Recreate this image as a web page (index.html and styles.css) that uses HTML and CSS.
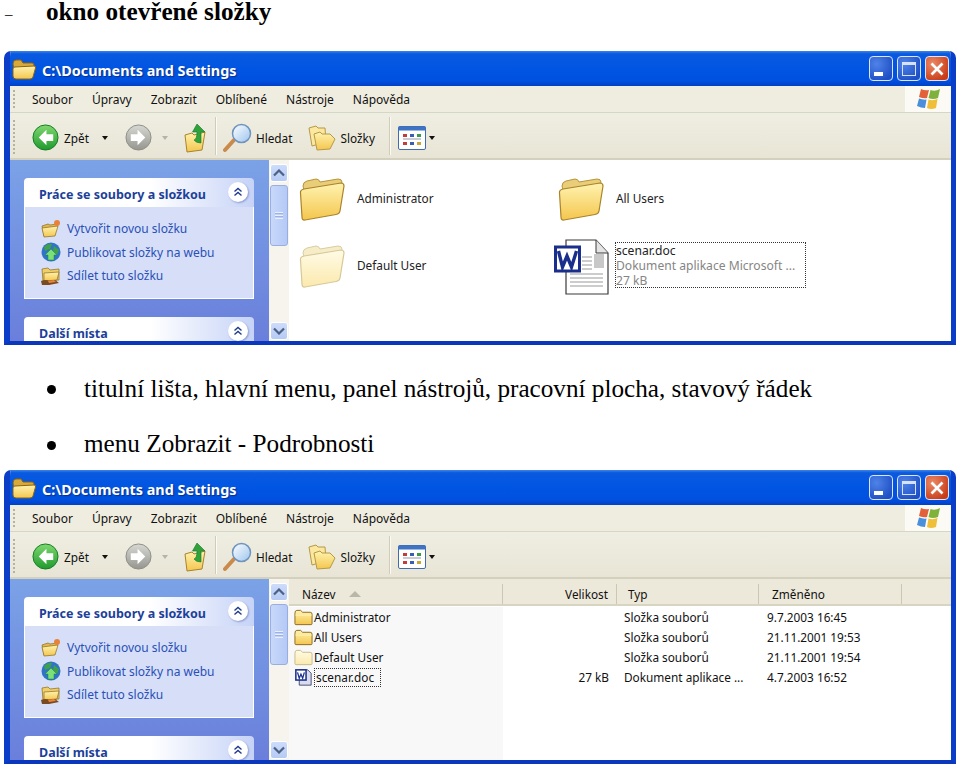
FILE: index.html
```html
<!DOCTYPE html>
<html lang="cs">
<head>
<meta charset="utf-8">
<title>okno otevřené složky</title>
<link rel="stylesheet" href="styles.css">
</head>
<body>
<svg class="defs" aria-hidden="true">
  <defs>
    <linearGradient id="gFolder" x1="0" y1="0" x2="0" y2="1"><stop offset="0" stop-color="#fff3b0"/><stop offset="1" stop-color="#f4c64e"/></linearGradient>
    <linearGradient id="gFolderPale" x1="0" y1="0" x2="0" y2="1"><stop offset="0" stop-color="#fffbe6"/><stop offset="1" stop-color="#fbe9ad"/></linearGradient>
    <linearGradient id="gGreen" x1="0" y1="0" x2="0" y2="1"><stop offset="0" stop-color="#7fd870"/><stop offset="1" stop-color="#1f9a2d"/></linearGradient>
    <linearGradient id="gGrey" x1="0" y1="0" x2="0" y2="1"><stop offset="0" stop-color="#d8d8d4"/><stop offset="1" stop-color="#96968f"/></linearGradient>
    <linearGradient id="gGlass" x1="0" y1="0" x2="1" y2="1"><stop offset="0" stop-color="#ffffff"/><stop offset="1" stop-color="#9cc4ee"/></linearGradient>
    <symbol id="i-folder" viewBox="0 0 46 46">
      <path d="M4 10 Q4 6 8 5 L17 3 Q20 3 21 6 L39 3 Q43 3 43 6 L41 12 L6 18Z" fill="#e9cd78" stroke="#b89436" stroke-width="1"/>
      <path d="M1.500 17 Q1 14 5 13 L42 7 Q45 7 45 10 L41 35 Q40.500 38 37 38.500 L6 44 Q3 44.500 3 41Z" fill="url(#gFolder)" stroke="#a8832b" stroke-width="1.200"/>
    </symbol>
    <symbol id="i-folder-pale" viewBox="0 0 46 46">
      <path d="M4 10 Q4 6 8 5 L17 3 Q20 3 21 6 L39 3 Q43 3 43 6 L41 12 L6 18Z" fill="#f6ecc8" stroke="#d8cda0" stroke-width="1"/>
      <path d="M1.500 17 Q1 14 5 13 L42 7 Q45 7 45 10 L41 35 Q40.500 38 37 38.500 L6 44 Q3 44.500 3 41Z" fill="url(#gFolderPale)" stroke="#d6c998" stroke-width="1.200"/>
    </symbol>
    <symbol id="i-title-folder" viewBox="0 0 24 22">
      <path d="M1 6 Q1 2 4 2 L9 2 L11 5 L20 5 Q22 5 22 7 L22 10 L2 12Z" fill="#d9a93a" stroke="#8a6414"/>
      <path d="M1 11 Q1 9 3 9 L22 8 Q24 8 23.500 10 L21 19 Q20.500 21 18 21 L4 21 Q1 21 1 18Z" fill="url(#gFolder)" stroke="#8a6414"/>
    </symbol>
    <symbol id="i-back" viewBox="0 0 28 28">
      <circle cx="14" cy="14" r="13" fill="url(#gGreen)" stroke="#0f7a1e"/>
      <path d="M15 6 L7 14 L15 22 L15 17.500 L22 17.500 L22 10.500 L15 10.500Z" fill="#fff"/>
    </symbol>
    <symbol id="i-forward" viewBox="0 0 28 28">
      <circle cx="14" cy="14" r="13" fill="url(#gGrey)" stroke="#8c8c86"/>
      <path d="M13 6 L21 14 L13 22 L13 17.500 L6 17.500 L6 10.500 L13 10.500Z" fill="#fff"/>
    </symbol>
    <symbol id="i-up" viewBox="0 0 24 30">
      <path d="M1 12 L8 10 L10 12 L21 9 L18 27 L3 29Z" fill="url(#gFolder)" stroke="#a8832b"/>
      <path d="M13 1 L21 9 L17 9 L17 20 Q12 20 10 17 Q13 16 13 9 L8.500 9Z" fill="#2fa339" stroke="#15762a" stroke-width=".6"/>
    </symbol>
    <symbol id="i-search" viewBox="0 0 30 30">
      <path d="M2 27 L11 17" stroke="#c98a4b" stroke-width="4" stroke-linecap="round"/>
      <circle cx="18.500" cy="10.500" r="9" fill="url(#gGlass)" stroke="#6f94bd" stroke-width="1.500"/>
    </symbol>
    <symbol id="i-folders" viewBox="0 0 28 26">
      <path d="M1 3 L8 1 L10 3 L17 3 L18 17 L4 21Z" fill="#fbe7a0" stroke="#b59a45"/>
      <path d="M6 9 L12 7 L14 9 L22 9 L27 14 L22 24 L9 25Z" fill="url(#gFolder)" stroke="#b59a45"/>
    </symbol>
    <symbol id="i-views" viewBox="0 0 28 24">
      <rect x=".5" y=".5" width="27" height="23" rx="1.500" fill="#fff" stroke="#3f6cae"/>
      <rect x=".5" y=".5" width="27" height="4" fill="#3f74c4"/>
      <g fill="#c43c3c"><rect x="5" y="8" width="4" height="3"/><rect x="5" y="16" width="4" height="3"/></g>
      <g fill="#3a5fb0"><rect x="12" y="8" width="4" height="3"/><rect x="12" y="16" width="4" height="3"/></g>
      <g fill="#3a9a4a"><rect x="19" y="8" width="4" height="3"/></g>
      <rect x="19" y="16" width="4" height="3" fill="#c9a63c"/>
      <rect x="5" y="12" width="18" height="2" fill="#c8ccd4"/>
    </symbol>
    <symbol id="i-flag" viewBox="0 0 24 22">
      <path d="M4 1 Q8 3 12 2 L10 10 Q7 11 2 9Z" fill="#e2603a"/>
      <path d="M13.500 2 Q18 4 23 1 L21 10 Q16 12 11.500 10Z" fill="#7fb23c"/>
      <path d="M2 10.500 Q6 12 9.500 11.500 L8 20 Q4 20 0 18Z" fill="#4a8fdc"/>
      <path d="M11.500 11.500 Q16 13 20.500 11 L19 20 Q14 22 10 20Z" fill="#f0bf3a"/>
    </symbol>
    <symbol id="i-newfolder" viewBox="0 0 20 20">
      <path d="M1 7 L7 5 L9 6 L16 5 L16 8 L3 17Z" fill="#e5b84f" stroke="#8a6a1c" stroke-width=".7"/>
      <path d="M1 9 L17 7 L14 17 L3 18Z" fill="url(#gFolder)" stroke="#8a6a1c" stroke-width=".7"/>
      <circle cx="16" cy="4" r="3" fill="#e8823a"/>
    </symbol>
    <symbol id="i-globe" viewBox="0 0 20 20">
      <circle cx="10" cy="10" r="9.500" fill="#2f74c6"/>
      <path d="M3 5 Q7 1 11 2 L9 7 L4 9Z M13 4 L18 8 L16 13 L12 9Z" fill="#3fa14a"/>
      <path d="M10 7 L16 13 L13 13 L13 18 L7 18 L7 13 L4 13Z" fill="#7be07a" stroke="#1f8a33" stroke-width=".5"/>
    </symbol>
    <symbol id="i-share" viewBox="0 0 20 20">
      <path d="M1 3 L7 2 L9 4 L18 3 L18 14 L2 15Z" fill="#f1cf68" stroke="#8a6a1c" stroke-width=".7"/>
      <path d="M3 7 L18 6 L16 14 L3 15Z" fill="url(#gFolder)" stroke="#8a6a1c" stroke-width=".7"/>
      <path d="M0 15 Q5 13 8 15 L14 14 L18 17 L8 19 L1 19Z" fill="#7a4a22"/>
      <path d="M7 15 L13 14 L15 16 L8 17Z" fill="#e8843c"/>
    </symbol>
    <symbol id="i-doc" viewBox="0 0 56 56">
      <path d="M12 1 L42 1 L54 14 L54 55 L12 55Z" fill="#fff" stroke="#3a3a3a" stroke-width="1.200"/>
      <path d="M42 1 L42 14 L54 14" fill="#e4e4e4" stroke="#3a3a3a" stroke-width="1"/>
      <path d="M28 18 H38 M28 22 H38 M28 26 H38 M28 30 H38 M16 35 H49 M16 39 H49 M16 43 H49 M16 47 H49" stroke="#9a9a9a" stroke-width="1.200"/>
      <rect x="40" y="15" width="10" height="14" fill="#c8c8c8"/>
      <rect x="1.500" y="8" width="24" height="24" fill="#fff" stroke="#1a2f8c" stroke-width="3"/>
      <path d="M4.500 12 L8.500 28 L13 17 L17.500 28 L22.500 12" fill="none" stroke="#1a2f8c" stroke-width="3.400"/>
    </symbol>
    <symbol id="i-doc-small" viewBox="0 0 20 20">
      <path d="M5 1 L15 1 L19 5 L19 19 L5 19Z" fill="#d8dcec" stroke="#333a60"/>
      <rect x="1" y="1" width="12" height="12" fill="#fff" stroke="#1a2f8c" stroke-width="1.800"/>
      <path d="M3 4 L5 11 L7 6 L9 11 L11 4" fill="none" stroke="#1a2f8c" stroke-width="1.500"/>
    </symbol>
    <symbol id="i-folder-small" viewBox="0 0 20 17">
      <path d="M1 4 Q1 1 3 1 L7 1 L9 3 L17 3 Q19 3 19 5 L19 15 Q19 16 18 16 L2 16 Q1 16 1 15Z" fill="url(#gFolder)" stroke="#8a6a1c"/>
      <path d="M1.500 6 H18.500" stroke="#fdf2b8"/>
    </symbol>
    <symbol id="i-folder-small-pale" viewBox="0 0 20 17">
      <path d="M1 4 Q1 1 3 1 L7 1 L9 3 L17 3 Q19 3 19 5 L19 15 Q19 16 18 16 L2 16 Q1 16 1 15Z" fill="url(#gFolderPale)" stroke="#c8b988"/>
    </symbol>
    <symbol id="i-chev" viewBox="0 0 10 10">
      <path d="M1.500 4.500 L5 1.500 L8.500 4.500 M1.500 8.500 L5 5.500 L8.500 8.500" fill="none" stroke="#1f3a8f" stroke-width="1.400"/>
    </symbol>
    <symbol id="i-xup" viewBox="0 0 12 8">
      <path d="M1 6.500 L6 1.500 L11 6.500" fill="none" stroke="#4d6185" stroke-width="2.200"/>
    </symbol>
    <symbol id="i-xdown" viewBox="0 0 12 8">
      <path d="M1 1.500 L6 6.500 L11 1.500" fill="none" stroke="#4d6185" stroke-width="2.200"/>
    </symbol>
  </defs>
</svg>

<h1 class="heading"><span class="heading-dash">–</span><span>okno otevřené složky</span></h1>

<section class="win">
  <header class="titlebar">
    <svg class="ico-title"><use href="#i-title-folder"/></svg>
    <span class="title-text">C:\Documents and Settings</span>
    <div class="ctrls">
      <span class="ctrl ctrl-blue"><span class="glyph-min"></span></span>
      <span class="ctrl ctrl-blue"><span class="glyph-max"></span></span>
      <span class="ctrl ctrl-red"><svg class="glyph-x" viewBox="0 0 14 14"><path d="M1.500 1.500 L12.500 12.500 M12.500 1.500 L1.500 12.500" stroke="#fff" stroke-width="2.600"/></svg></span>
    </div>
  </header>
  <nav class="menubar">
    <span class="grip"></span>
    <span class="menu-item">Soubor</span><span class="menu-item">Úpravy</span><span class="menu-item">Zobrazit</span><span class="menu-item">Oblíbené</span><span class="menu-item">Nástroje</span><span class="menu-item">Nápověda</span>
    <span class="flagcell"><svg class="ico-flag"><use href="#i-flag"/></svg></span>
  </nav>
  <div class="toolbar">
    <span class="grip grip-tall"></span>
    <svg class="ico-nav ml-back"><use href="#i-back"/></svg><span class="tb-label ml-zpet">Zpět</span><span class="caret ml-c1"></span>
    <svg class="ico-nav ml-fwd"><use href="#i-forward"/></svg><span class="caret caret-dim ml-c2"></span>
    <svg class="ico-up"><use href="#i-up"/></svg>
    <span class="sep ml-s1"></span>
    <svg class="ico-search"><use href="#i-search"/></svg><span class="tb-label ml-hl">Hledat</span>
    <svg class="ico-folders"><use href="#i-folders"/></svg><span class="tb-label ml-sl">Složky</span>
    <span class="sep ml-s2"></span>
    <svg class="ico-views"><use href="#i-views"/></svg><span class="caret ml-c3"></span>
  </div>
  <div class="body">
    <aside class="pane">
      <div class="box">
        <div class="box-head"><span>Práce se soubory a složkou</span><span class="chev"><svg class="chev-i"><use href="#i-chev"/></svg></span></div>
        <ul class="box-list">
          <li><svg class="ico-task"><use href="#i-newfolder"/></svg>Vytvořit novou složku</li>
          <li><svg class="ico-task"><use href="#i-globe"/></svg>Publikovat složky na webu</li>
          <li><svg class="ico-task"><use href="#i-share"/></svg>Sdílet tuto složku</li>
        </ul>
      </div>
      <div class="box box-second">
        <div class="box-head box-head-wide"><span>Další místa</span><span class="chev"><svg class="chev-i"><use href="#i-chev"/></svg></span></div>
      </div>
    </aside>
    <div class="scroll">
      <span class="sbtn"><svg class="sarrow"><use href="#i-xup"/></svg></span>
      <span class="thumb"><span class="thumb-grip"></span></span>
      <span class="sbtn sbtn-down"><svg class="sarrow"><use href="#i-xdown"/></svg></span>
    </div>
    <main class="tiles">
      <div class="tile"><svg class="ico-big"><use href="#i-folder"/></svg><span class="tile-name">Administrator</span></div>
      <div class="tile"><svg class="ico-big"><use href="#i-folder"/></svg><span class="tile-name">All Users</span></div>
      <div class="tile"><svg class="ico-big"><use href="#i-folder-pale"/></svg><span class="tile-name">Default User</span></div>
      <div class="tile tile-doc"><svg class="ico-docbig"><use href="#i-doc"/></svg>
        <div class="tile-sel"><div>scenar.doc</div><div class="muted">Dokument aplikace Microsoft ...</div><div class="muted">27 kB</div></div>
      </div>
    </main>
  </div>
</section>

<ul class="bullets">
  <li>titulní lišta, hlavní menu, panel nástrojů, pracovní plocha, stavový řádek</li>
  <li>menu Zobrazit - Podrobnosti</li>
</ul>

<section class="win">
  <header class="titlebar">
    <svg class="ico-title"><use href="#i-title-folder"/></svg>
    <span class="title-text">C:\Documents and Settings</span>
    <div class="ctrls">
      <span class="ctrl ctrl-blue"><span class="glyph-min"></span></span>
      <span class="ctrl ctrl-blue"><span class="glyph-max"></span></span>
      <span class="ctrl ctrl-red"><svg class="glyph-x" viewBox="0 0 14 14"><path d="M1.500 1.500 L12.500 12.500 M12.500 1.500 L1.500 12.500" stroke="#fff" stroke-width="2.600"/></svg></span>
    </div>
  </header>
  <nav class="menubar">
    <span class="grip"></span>
    <span class="menu-item">Soubor</span><span class="menu-item">Úpravy</span><span class="menu-item">Zobrazit</span><span class="menu-item">Oblíbené</span><span class="menu-item">Nástroje</span><span class="menu-item">Nápověda</span>
    <span class="flagcell"><svg class="ico-flag"><use href="#i-flag"/></svg></span>
  </nav>
  <div class="toolbar">
    <span class="grip grip-tall"></span>
    <svg class="ico-nav ml-back"><use href="#i-back"/></svg><span class="tb-label ml-zpet">Zpět</span><span class="caret ml-c1"></span>
    <svg class="ico-nav ml-fwd"><use href="#i-forward"/></svg><span class="caret caret-dim ml-c2"></span>
    <svg class="ico-up"><use href="#i-up"/></svg>
    <span class="sep ml-s1"></span>
    <svg class="ico-search"><use href="#i-search"/></svg><span class="tb-label ml-hl">Hledat</span>
    <svg class="ico-folders"><use href="#i-folders"/></svg><span class="tb-label ml-sl">Složky</span>
    <span class="sep ml-s2"></span>
    <svg class="ico-views"><use href="#i-views"/></svg><span class="caret ml-c3"></span>
  </div>
  <div class="body">
    <aside class="pane">
      <div class="box">
        <div class="box-head"><span>Práce se soubory a složkou</span><span class="chev"><svg class="chev-i"><use href="#i-chev"/></svg></span></div>
        <ul class="box-list">
          <li><svg class="ico-task"><use href="#i-newfolder"/></svg>Vytvořit novou složku</li>
          <li><svg class="ico-task"><use href="#i-globe"/></svg>Publikovat složky na webu</li>
          <li><svg class="ico-task"><use href="#i-share"/></svg>Sdílet tuto složku</li>
        </ul>
      </div>
      <div class="box box-second">
        <div class="box-head box-head-wide"><span>Další místa</span><span class="chev"><svg class="chev-i"><use href="#i-chev"/></svg></span></div>
      </div>
    </aside>
    <div class="scroll">
      <span class="sbtn"><svg class="sarrow"><use href="#i-xup"/></svg></span>
      <span class="thumb"><span class="thumb-grip"></span></span>
      <span class="sbtn sbtn-down"><svg class="sarrow"><use href="#i-xdown"/></svg></span>
    </div>
    <main class="details">
      <div class="d-row d-head">
        <span class="c-name">Název<i class="sort-up"></i></span><span class="c-size">Velikost</span><span class="c-type">Typ</span><span class="c-date">Změněno</span><span class="c-end"></span>
      </div>
      <div class="d-row"><span class="c-name"><svg class="ico-small"><use href="#i-folder-small"/></svg>Administrator</span><span class="c-size"></span><span class="c-type">Složka souborů</span><span class="c-date">9.7.2003 16:45</span></div>
      <div class="d-row"><span class="c-name"><svg class="ico-small"><use href="#i-folder-small"/></svg>All Users</span><span class="c-size"></span><span class="c-type">Složka souborů</span><span class="c-date">21.11.2001 19:53</span></div>
      <div class="d-row"><span class="c-name"><svg class="ico-small"><use href="#i-folder-small-pale"/></svg>Default User</span><span class="c-size"></span><span class="c-type">Složka souborů</span><span class="c-date">21.11.2001 19:54</span></div>
      <div class="d-row"><span class="c-name"><svg class="ico-small"><use href="#i-doc-small"/></svg><span class="focus">scenar.doc</span></span><span class="c-size">27 kB</span><span class="c-type">Dokument aplikace ...</span><span class="c-date">4.7.2003 16:52</span></div>
      <div class="d-fill"></div>
    </main>
  </div>
</section>
</body>
</html>
```

FILE: styles.css
```css
* { box-sizing: border-box; }
html, body { margin: 0; padding: 0; background: #fff; }
body { width: 960px; height: 766px; overflow: hidden; font-family: "Liberation Serif", serif; color: #000; }
.defs { position: absolute; width: 0; height: 0; overflow: hidden; }

.heading { display: flex; margin: 0; height: 51px; padding: 0 0 0 5px; font-size: 25.200px; line-height: 24px; font-weight: 700; }
.heading-dash { width: 41px; font-weight: 400; font-size: 15px; line-height: 29px; }

.bullets { list-style: none; margin: 0; padding: 0; height: 125px; font-size: 25.200px; }
.bullets li { position: relative; height: 56px; padding: 30px 0 0 84px; line-height: 28px; white-space: nowrap; }
.bullets li + li { height: 69px; padding-top: 29px; }
.bullets li::before { content: ""; position: absolute; left: 47px; top: 40px; width: 9px; height: 9px; border-radius: 50%; background: #000; }

.win { display: flex; flex-direction: column; width: 952px; height: 294px; margin-left: 4px; border: 6px solid #0a3ec8; border-width: 0 5px 4px 6px; border-bottom-color: #0b37bd; border-radius: 7px 7px 0 0; background: #fff; font-family: "Noto Sans", sans-serif; font-size: 12px; color: #111; overflow: hidden; }
.titlebar { display: flex; align-items: center; flex: none; height: 35px; margin: 0 -5px 0 -6px; padding: 0 7px 0 8px; background: linear-gradient(#3c85ea 0, #0a5ae0 8%, #0055e2 50%, #0150df 85%, #0140c8 100%); }
.ico-title { width: 24px; height: 22px; flex: none; }
.title-text { margin: 4px 0 0 6px; font: 700 14.400px "Noto Sans", sans-serif; color: #fff; text-shadow: 1px 1px 1px #0a2f8a; }
.ctrls { display: flex; gap: 4px; margin-left: auto; }
.ctrl { display: flex; align-items: center; justify-content: center; width: 24px; height: 25px; border: 1px solid #dbe6fb; border-radius: 4px; position: relative; }
.ctrl-blue { background: radial-gradient(circle at 30% 30%, #4f83e8, #1f4fc4 80%); }
.ctrl-red { background: radial-gradient(circle at 30% 30%, #eb8a66, #c93c18 80%); }
.glyph-min { position: absolute; left: 4px; bottom: 4px; width: 9px; height: 4px; background: #fff; }
.glyph-max { width: 14px; height: 14px; border: 1px solid #d6e2fa; border-top-width: 3px; }
.glyph-x { width: 14px; height: 14px; }

.menubar { display: flex; align-items: center; flex: none; height: 27px; background: #efede0; border-bottom: 1px solid #d8d5c4; padding-left: 3px; }
.grip { flex: none; width: 2px; height: 18px; margin-right: 17px; background: repeating-linear-gradient(#b5b2a0 0 2px, transparent 2px 4px); }
.grip-tall { height: 36px; }
.menu-item { margin-right: 19px; white-space: nowrap; }
.flagcell { display: flex; align-items: center; justify-content: center; width: 46px; height: 26px; margin-left: auto; padding-left: 2px; background: #fbfaf5; }
.ico-flag { width: 24px; height: 22px; }

.toolbar { display: flex; align-items: center; flex: none; height: 47px; background: linear-gradient(#efeee2, #e8e5d6); border-bottom: 2px solid #d3d0bd; padding: 4px 0 0 3px; }
.ico-nav { width: 27px; height: 27px; flex: none; }
.ml-back { margin-left: 0; }
.tb-label { white-space: nowrap; font-size: 11.800px; }
.ml-zpet { margin-left: 5px; }
.caret { flex: none; width: 0; height: 0; border: 3.500px solid transparent; border-top: 4px solid #111; border-bottom: 0; }
.caret-dim { border-top-color: #b5b3a6; }
.ml-c1 { margin-left: 13px; }
.ml-fwd { margin-left: 17px; }
.ml-c2 { margin-left: 10px; }
.ico-up { width: 24px; height: 30px; flex: none; margin-left: 16px; }
.sep { flex: none; width: 1px; height: 38px; margin-top: -4px; background: #cfccb8; border-right: 1px solid #fbfaf5; box-sizing: content-box; }
.ml-s1 { margin-left: 7px; }
.ico-search { width: 30px; height: 30px; flex: none; margin-left: 6px; }
.ml-hl { margin-left: 3px; }
.ico-folders { width: 28px; height: 26px; flex: none; margin-left: 15px; }
.ml-sl { margin-left: 5px; }
.ml-s2 { margin-left: 14px; }
.ico-views { width: 28px; height: 24px; flex: none; margin-left: 7px; }
.ml-c3 { margin-left: 3px; }

.body { display: flex; flex: 1; min-height: 0; }
.pane { flex: none; width: 259px; padding: 18px 14px 0; overflow: hidden; background: linear-gradient(#7ba2e7, #6a7fdb); }
.box { width: 230px; }
.box-second { margin-top: 18px; }
.box-head { display: flex; justify-content: space-between; align-items: center; height: 29px; padding: 3px 6px 0 15px; border-radius: 4px 4px 0 0; font: 700 12.500px "Noto Sans", sans-serif; background: linear-gradient(90deg, #fff 55%, #c6d3f7); }
.box-head span:first-child { color: #1d3f9a; }
.chev { display: flex; align-items: center; justify-content: center; width: 20px; height: 20px; margin-top: -5px; border-radius: 50%; background: #fff; box-shadow: 1px 1px 2px #8a9ad0; }
.chev-i { width: 10px; height: 10px; }
.box-list { list-style: none; margin: 0; padding: 10px 0 0 16px; height: 92px; background: #d6dff7; border: 1px solid #fff; border-top: 0; color: #2a50b8; }
.box-list li { display: flex; align-items: center; height: 23.500px; white-space: nowrap; }
.ico-task { width: 20px; height: 20px; flex: none; margin-right: 6px; }

.scroll { display: flex; flex-direction: column; align-items: center; flex: none; width: 20px; padding: 4px 0 1px; background: #f6f4ec; }
.sbtn { display: flex; align-items: center; justify-content: center; flex: none; width: 18px; height: 18px; border: 1px solid #fff; border-radius: 3px; background: linear-gradient(#cddcfb, #b5caf4); }
.sbtn-down { margin-top: auto; }
.sarrow { width: 12px; height: 8px; }
.thumb { display: flex; align-items: center; justify-content: center; flex: none; width: 18px; height: 61px; margin-top: 3px; border: 1px solid #98aee0; border-radius: 3px; background: linear-gradient(90deg, #c8d8fa, #b5c9f6); }
.thumb-grip { width: 8px; height: 7px; background: repeating-linear-gradient(#e9effc 0 1px, #9db2e4 1px 2px, transparent 2px 3px); }

.tiles { flex: 1; display: grid; grid-template-columns: 259px 1fr; grid-auto-rows: 66.500px; padding: 16px 0 0 10px; }
.tile { display: flex; align-items: center; height: 46px; white-space: nowrap; color: #222; font-size: 12.100px; }
.tile-name { font-size: 11.800px; margin-top: -2px; }
.ico-big { width: 46px; height: 46px; flex: none; margin-right: 12px; }
.tile-doc { margin-left: -4px; }
.ico-docbig { width: 56px; height: 56px; flex: none; margin: 0 5px 0 0; transform: translateY(1px); }
.tile-sel { width: 191px; height: 46px; line-height: 15.300px; border: 1px dotted #333; transform: translateY(-1px); }
.muted { color: #858585; }

.details { flex: 1; display: flex; flex-direction: column; min-width: 0; background: #fff; font-size: 11.800px; }
.d-row { display: flex; flex: none; height: 20px; align-items: center; white-space: nowrap; }
.d-row .c-name { background: #f8f8f8; }
.d-head { height: 27px; align-items: flex-end; background: #ede9da; border-bottom: 2px solid #d8d4c2; }
.d-row.d-head span { background: none; height: 20px; display: flex; align-items: center; border-right: 1px solid #cbc7b3; }
.d-row.d-head + .d-row { margin-top: 1px; }
.c-name { display: flex; align-items: center; width: 214px; height: 100%; padding-left: 5px; }
.d-head .c-name { padding-left: 13px; }
.c-size { width: 114px; text-align: right; padding-right: 8px; }
.d-head .c-size { justify-content: flex-end; }
.c-type { width: 142px; padding-left: 7px; }
.d-head .c-type { padding-left: 11px; }
.c-date { width: 143px; padding-left: 8px; }
.d-head .c-date { padding-left: 13px; }
.d-row.d-head .c-end { width: 0; border: 0; }
.sort-up { width: 0; height: 0; margin-left: 13px; border: 6px solid transparent; border-top: 0; border-bottom: 6px solid #b9b7a8; }
.ico-small { width: 19px; height: 17px; flex: none; margin-right: 1px; }
.focus { padding: 0 6px 0 1px; line-height: 17px; border: 1px dotted #333; }
.d-fill { flex: 1; width: 214px; background: #f8f8f8; }
```
